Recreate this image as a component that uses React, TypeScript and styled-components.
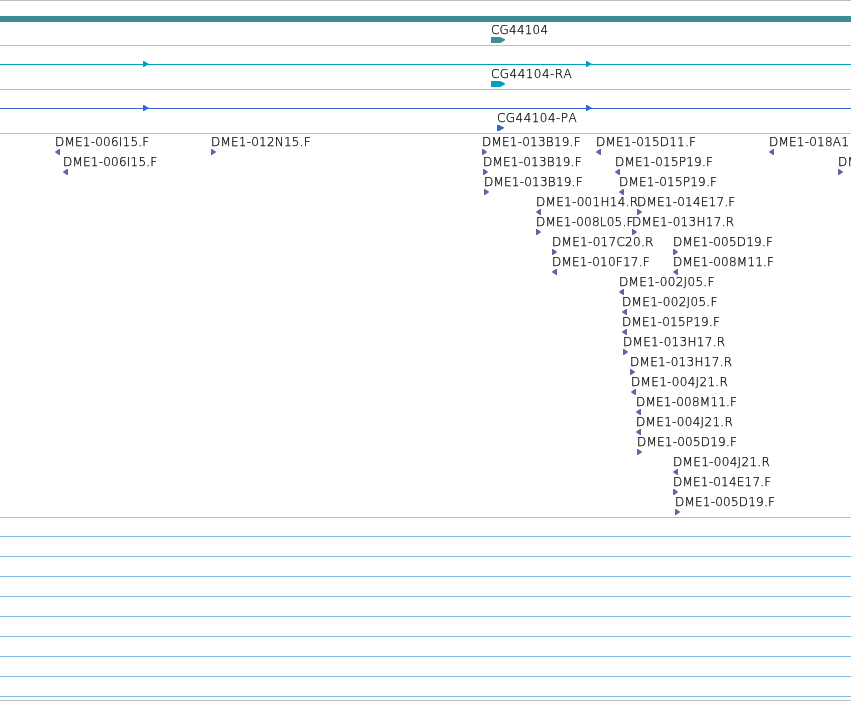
import styled, { createGlobalStyle } from 'styled-components';

const GlobalStyle = createGlobalStyle`
  body {
    margin: 0;
    background: #fff;
    overflow: hidden;
  }
`;

const Browser = styled.main`
  width: 100%;
  height: 701px;
  overflow: hidden;
  font-family: 'DejaVu Sans Light', 'DejaVu Sans', sans-serif;
  font-size: 12px;
  font-weight: 200;
  font-kerning: none;
  color: #000;
  will-change: transform;
`;

const Track = styled.section<{ $height: number }>`
  box-sizing: border-box;
  height: ${(p) => p.$height}px;
  border-top: 1px solid #bdbdbd;
  overflow: hidden;
`;

const GeneBar = styled.div`
  height: 6px;
  margin-top: 15px;
  background: #3d8e94;
`;

const Intron = styled.div<{ $color: string }>`
  display: grid;
  align-items: center;
  height: 6px;
  margin: 15px 0 -1px;
  background: linear-gradient(${(p) => p.$color}, ${(p) => p.$color}) 0 3px / 100% 1px no-repeat;
`;

const Row = styled.div`
  display: grid;
  justify-content: start;
  height: 20px;
`;

// all features of a row share one grid cell and are shifted to their start
const Feature = styled.div<{ $start: number }>`
  grid-area: 1 / 1;
  width: max-content;
  margin-left: ${(p) => p.$start}px;
`;

const Label = styled.div<{ $spacing?: number }>`
  height: 15px;
  line-height: 16px;
  letter-spacing: ${(p) => p.$spacing ?? 0.2}px;
  white-space: nowrap;
  -webkit-text-stroke: 0.25px #000;
`;

const Glyph = styled.svg`
  display: block;
`;

const StrandMark = styled(Glyph)<{ $start: number }>`
  grid-area: 1 / 1;
  margin-left: ${(p) => p.$start}px;
`;

const EmptyLane = styled.div<{ $height?: number }>`
  box-sizing: border-box;
  height: ${(p) => p.$height ?? 20}px;
  border-bottom: 1px solid #7ebae2;
`;

type Strand = 'L' | 'R';
type Bac = [start: number, strand: Strand, name: string];

const bacs: Bac[][] = [
  [
    [55, 'L', 'DME1-006I15.F'],
    [211, 'R', 'DME1-012N15.F'],
    [482, 'R', 'DME1-013B19.F'],
    [596, 'L', 'DME1-015D11.F'],
    [769, 'L', 'DME1-018A1'],
  ],
  [
    [63, 'L', 'DME1-006I15.F'],
    [483, 'R', 'DME1-013B19.F'],
    [615, 'L', 'DME1-015P19.F'],
    [838, 'R', 'DM'],
  ],
  [
    [484, 'R', 'DME1-013B19.F'],
    [619, 'L', 'DME1-015P19.F'],
  ],
  [
    [536, 'L', 'DME1-001H14.R'],
    [637, 'R', 'DME1-014E17.F'],
  ],
  [
    [536, 'R', 'DME1-008L05.F'],
    [632, 'R', 'DME1-013H17.R'],
  ],
  [
    [552, 'R', 'DME1-017C20.R'],
    [673, 'R', 'DME1-005D19.F'],
  ],
  [
    [552, 'L', 'DME1-010F17.F'],
    [673, 'L', 'DME1-008M11.F'],
  ],
  [[619, 'L', 'DME1-002J05.F']],
  [[622, 'L', 'DME1-002J05.F']],
  [[622, 'L', 'DME1-015P19.F']],
  [[623, 'R', 'DME1-013H17.R']],
  [[630, 'R', 'DME1-013H17.R']],
  [[631, 'L', 'DME1-004J21.R']],
  [[636, 'L', 'DME1-008M11.F']],
  [[636, 'L', 'DME1-004J21.R']],
  [[637, 'R', 'DME1-005D19.F']],
  [[673, 'L', 'DME1-004J21.R']],
  [[673, 'R', 'DME1-014E17.F']],
  [[675, 'R', 'DME1-005D19.F']],
];

function tracking(name: string) {
  if (name.includes('J')) return 0.32;
  return name.endsWith('R') ? 0.3 : 0.22;
}

function Arrow({ strand }: { strand: Strand }) {
  return (
    <Glyph width='5' height='6' viewBox='0 0 5 6'>
      <path d={strand === 'R' ? 'M0 0H1L5.5 3L1 6H0Z' : 'M5 0H4L-.5 3L4 6H5Z'} fill='#7856a8' />
    </Glyph>
  );
}

function Exon({ color }: { color: string }) {
  return (
    <Glyph width='14' height='6' viewBox='0 0 14 6'>
      <path d='M0 0H9L14 2.2V3.2L9.5 6H0Z' fill={color} />
    </Glyph>
  );
}

function StrandLine({ color }: { color: string }) {
  return (
    <Intron $color={color}>
      {[143, 586].map((x) => (
        <StrandMark key={x} $start={x} width='6' height='6' viewBox='0 0 6 6'>
          <path d='M0 0H1L6 3L1 6H0Z' fill={color} />
        </StrandMark>
      ))}
    </Intron>
  );
}

export default function App() {
  return (
    <>
      <GlobalStyle />
      <Browser>
        <Track $height={45}>
          <GeneBar />
          <Row>
            <Feature $start={491}>
              <Label>CG44104</Label>
              <Exon color='#3d8e94' />
            </Feature>
          </Row>
        </Track>
        <Track $height={44}>
          <StrandLine color='#00a0c0' />
          <Row>
            <Feature $start={491}>
              <Label $spacing={0.45}>CG44104-RA</Label>
              <Exon color='#00a0c0' />
            </Feature>
          </Row>
        </Track>
        <Track $height={44}>
          <StrandLine color='#3366cc' />
          <Row>
            <Feature $start={497}>
              <Label $spacing={0.45}>CG44104-PA</Label>
              <Glyph width='7' height='6' viewBox='0 0 7 6'>
                <path d='M0 0H2L7 2.5V3.2L2 6H0Z' fill='#3366cc' />
              </Glyph>
            </Feature>
          </Row>
        </Track>
        <Track $height={384}>
          {bacs.map((row, i) => (
            <Row key={i}>
              {row.map(([start, strand, name]) => (
                <Feature key={start} $start={start}>
                  <Label $spacing={tracking(name)}>{name}</Label>
                  <Arrow strand={strand} />
                </Feature>
              ))}
            </Row>
          ))}
        </Track>
        <Track $height={183}>
          <EmptyLane $height={19} />
          {Array.from({ length: 8 }, (_, i) => (
            <EmptyLane key={i} />
          ))}
        </Track>
        <Track $height={1} />
      </Browser>
    </>
  );
}
